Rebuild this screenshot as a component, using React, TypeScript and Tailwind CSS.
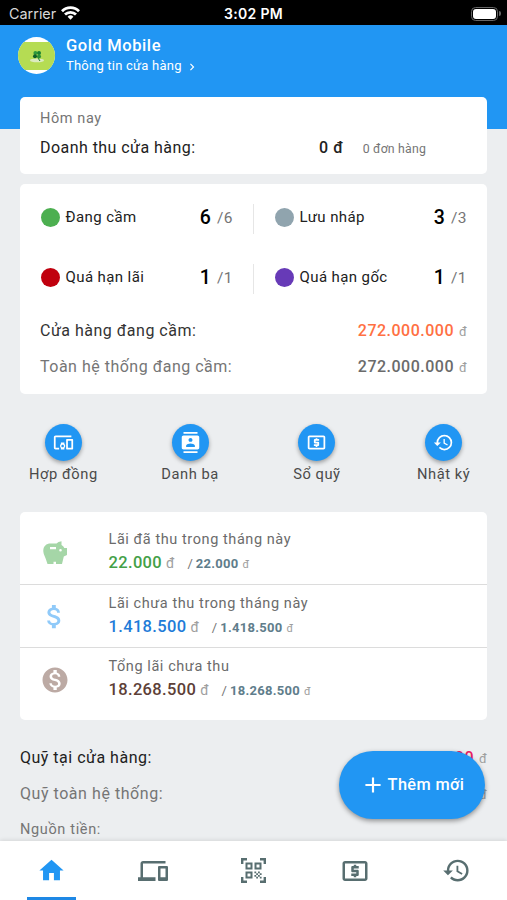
import React from "react";
import {
  MdHome,
  MdDevices,
  MdDevicesOther,
  MdContacts,
  MdLocalAtm,
  MdHistory,
  MdAttachMoney,
  MdMonetizationOn,
  MdAdd,
  MdChevronRight,
} from "react-icons/md";

function StatusBar() {
  return (
    <div className="grid h-[25px] shrink-0 grid-cols-3 items-center bg-black pr-1.5 pl-[9px] pt-[2px] font-[Inter,sans-serif] text-white">
      <div className="flex items-center gap-[5px] text-[14.4px] text-[#d8d8d8]">
        <span>Carrier</span>
        <svg width="19" height="14" viewBox="0 0 19 14" fill="none" stroke="white" strokeWidth="2.8">
          <path d="M1 5.2a12 12 0 0 1 17 0" />
          <path d="M4 8.6a7.8 7.8 0 0 1 11 0" />
          <path d="M9.5 13.7 6.6 10.8a4.1 4.1 0 0 1 5.8 0z" fill="white" stroke="none" />
        </svg>
      </div>
      <div className="pr-[3px] text-center text-[14px] font-semibold tracking-[0.35px]">3:02 PM</div>
      <div className="flex items-center justify-end gap-px">
        <div className="h-[14px] w-[27px] rounded-[4.5px] border border-[#666] p-px">
          <div className="h-full w-full rounded-[3px] bg-white" />
        </div>
        <div className="h-[5px] w-[2px] rounded-r-full bg-[#666]" />
      </div>
    </div>
  );
}

function Header() {
  return (
    <div className="flex h-[104px] shrink-0 items-start gap-[11px] bg-[#2196f3] pt-[12px] pl-[18px] text-white">
      <div className="flex h-[37px] w-[37px] items-center overflow-hidden rounded-full bg-white">
        <div className="flex h-[28px] w-full items-center justify-center bg-[#b5dc53]">
          <svg width="16" height="14" viewBox="0 0 16 14">
            <ellipse cx="8" cy="11.4" rx="7" ry="1.9" fill="#dcebc0" />
            <path d="M9 7q0 3 2 5" stroke="#1b7a2e" strokeWidth="1" fill="none" />
            <circle cx="6.4" cy="4" r="2" fill="#2f9a3c" />
            <circle cx="10" cy="4" r="2" fill="#178032" />
            <circle cx="6" cy="7.3" r="2" fill="#0f5f2a" />
            <circle cx="10" cy="7.4" r="2" fill="#2b9136" />
          </svg>
        </div>
      </div>
      <div>
        <div className="text-[16.5px] leading-[18px] font-medium tracking-[0.6px]">Gold Mobile</div>
        <div className="mt-px flex items-center gap-[3px] text-[13px] leading-[20px] tracking-[0.22px]">
          <span>Thông tin cửa hàng</span>
          <MdChevronRight size={14} className="mt-0.5" />
        </div>
      </div>
    </div>
  );
}

function Stat({ color, label, count, total }: { color: string; label: string; count: number; total: number }) {
  return (
    <div className="flex h-[30px] flex-1 items-center pr-[20px] pb-[4px] pl-[21px]">
      <span className={`h-[19px] w-[19px] rounded-full ${color}`} />
      <span className="ml-[5.5px] text-[15px] tracking-[0.4px] text-[#212121]">{label}</span>
      <span className="mt-px ml-auto text-[19.5px] font-medium text-black">{count}</span>
      <span className="mt-[4px] ml-1.5 text-[15.5px] tracking-[0.5px] text-[#757575]">/{total}</span>
    </div>
  );
}

function Amount({ value, color }: { value: string; color: string }) {
  return (
    <span className="flex items-baseline gap-[5px]">
      <span className={`text-[16px] font-medium tracking-[0.5px] ${color}`}>{value}</span>
      <span className="text-[13px] tracking-[0.2px] text-[#9e9e9e]">đ</span>
    </span>
  );
}

function Shortcut({ icon, label }: { icon: React.ReactNode; label: string }) {
  return (
    <div className="flex flex-1 flex-col items-center">
      <div className="flex h-[37px] w-[37px] items-center justify-center rounded-full bg-[#2196f3] text-white shadow-[0_2px_4px_rgba(0,0,0,0.35)]">
        {icon}
      </div>
      <span className="mt-[3px] text-[14.7px] leading-5 tracking-[0.55px] text-[#4a4a4a]">{label}</span>
    </div>
  );
}

function Interest({ icon, title, value, total, color }: { icon: React.ReactNode; title: string; value: string; total: string; color: string }) {
  return (
    <div className="flex items-center pl-[21px]">
      <div className="mb-[2px] flex w-[27px] justify-center [&>svg]:shrink-0">{icon}</div>
      <div className="ml-[40.5px]">
        <div className="text-[14.5px] leading-5 tracking-[0.57px] text-[#6b6b6b]">{title}</div>
        <div className="flex items-baseline leading-[25px]">
          <span className={`text-[16.5px] font-medium tracking-[0.35px] ${color}`}>{value}</span>
          <span className="ml-1 text-[14px] text-[#9e9e9e]">đ</span>
          <span className="ml-[13px] text-[13px] text-[#757575]">/</span>
          <span className="ml-[3px] text-[13px] font-bold tracking-[0.28px] text-[#607d8b]">{total}</span>
          <span className="ml-1 text-[11px] text-[#9e9e9e]">đ</span>
        </div>
      </div>
    </div>
  );
}

function PiggyBank() {
  return (
    <svg width="26" height="26" viewBox="0 0 26 26" fill="#a5d6a7">
      <path
        fillRule="evenodd"
        d="M7 3.5h7.5Q16 1.5 19.5 1.3V5q2 1 2.8 3H25v7l-3.2 1.6L20 24h-6v-2.2h-2.5V24h-6Q4 19 1.8 14 .5 9.5 2.4 6.5 4 3.8 7 3.5ZM8 7v2.2h6V7ZM18.5 9a1.3 1.3 0 1 0 0 2.6 1.3 1.3 0 0 0 0-2.6Z"
      />
    </svg>
  );
}

function QrScan() {
  return (
    <svg width="25" height="25" viewBox="0 0 25 25" fill="none" stroke="currentColor" strokeWidth="2">
      <path d="M1.2 6V1.2H6M19 1.2h4.8V6M1.2 19v4.8H6M19 23.8h4.8V19" strokeWidth="2.4" />
      <path d="M5.5 5.5h5v5h-5zM14.5 5.5h5v5h-5zM5.5 14.5h5v5h-5z" />
      <path
        fill="currentColor"
        stroke="none"
        d="M13.4 13.4h1.8v1.8h-1.8zM17 13.4h1.8v1.8H17zM15.2 15.2H17V17h-1.8zM18.8 15.2h1.8V17h-1.8zM13.4 17h1.8v1.8h-1.8zM17 17h1.8v1.8H17zM15.2 18.8H17v1.8h-1.8zM18.8 18.8h1.8v1.8h-1.8z"
      />
    </svg>
  );
}

function BottomNav() {
  return (
    <nav className="relative grid h-[59px] shrink-0 grid-cols-5 bg-white text-[#586e70] shadow-[0_-1px_4px_rgba(0,0,0,0.1)]">
      <div className="flex flex-col items-center justify-between pt-[15px] pl-px text-[#2196f3]">
        <MdHome size={29} />
        <div className="h-[3px] w-[49px] bg-[#1e88e5]" />
      </div>
      <div className="flex justify-center pt-[15px] pl-px"><MdDevices size={30} /></div>
      <div className="flex justify-center pt-[17px]"><QrScan /></div>
      <div className="flex justify-center pt-[15px]"><MdLocalAtm size={30} /></div>
      <div className="flex justify-center pt-[15px]"><MdHistory size={29} /></div>
    </nav>
  );
}

export default function App() {
  return (
    <div className="relative flex h-[900px] w-[507px] flex-col overflow-hidden bg-[#eceef0] font-[Roboto,sans-serif]">
      <StatusBar />
      <Header />
      <main className="-mt-[32px] flex min-h-0 flex-1 flex-col">
        <section className="mx-5 h-[77px] shrink-0 rounded-[5px] bg-white px-5 pt-[12px]">
          <div className="text-[14.5px] leading-5 tracking-[0.6px] text-[#757575]">Hôm nay</div>
          <div className="mt-[9px] flex items-baseline leading-5">
            <span className="w-[279px] text-[16px] tracking-[0.45px] text-[#212121]">Doanh thu cửa hàng:</span>
            <span className="text-[16px] font-medium tracking-[0.6px] text-[#212121]">0 đ</span>
            <span className="ml-[19px] text-[12.3px] tracking-[0.2px] text-[#757575]">0 đơn hàng</span>
          </div>
        </section>

        <section className="mx-5 mt-[10px] h-[210px] shrink-0 rounded-[5px] bg-white pt-[20px]">
          <div className="flex divide-x divide-[#e6e6e6]">
            <Stat color="bg-[#4caf50]" label="Đang cầm" count={6} total={6} />
            <Stat color="bg-[#90a4ae]" label="Lưu nháp" count={3} total={3} />
          </div>
          <div className="mt-[30px] flex divide-x divide-[#e6e6e6]">
            <Stat color="bg-[#c0000e]" label="Quá hạn lãi" count={1} total={1} />
            <Stat color="bg-[#673ab7]" label="Quá hạn gốc" count={1} total={1} />
          </div>
          <div className="mt-[27px] flex items-baseline justify-between px-5 leading-5">
            <span className="text-[16px] tracking-[0.5px] text-[#333]">Cửa hàng đang cầm:</span>
            <Amount value="272.000.000" color="text-[#ff7043]" />
          </div>
          <div className="mt-[15px] flex items-baseline justify-between px-5 leading-5">
            <span className="text-[16px] tracking-[0.5px] text-[#757575]">Toàn hệ thống đang cầm:</span>
            <Amount value="272.000.000" color="text-[#6b6b6b]" />
          </div>
        </section>

        <section className="mt-[30px] flex h-[88px] shrink-0">
          <Shortcut label="Hợp đồng" icon={<MdDevicesOther size={21} />} />
          <Shortcut label="Danh bạ" icon={<MdContacts size={21} />} />
          <Shortcut label="Sổ quỹ" icon={<MdLocalAtm size={21} />} />
          <Shortcut label="Nhật ký" icon={<MdHistory size={21} />} />
        </section>

        <section className="mx-5 h-[208px] shrink-0 divide-y divide-[#dcdcdc] rounded-[5px] bg-white pt-[9px]">
          <div className="h-[64px] pt-[9px]">
            <Interest icon={<PiggyBank />} title="Lãi đã thu trong tháng này" value="22.000" total="22.000" color="text-[#43a047]" />
          </div>
          <div className="h-[63px] pt-[9px]">
            <Interest icon={<MdAttachMoney size={31} color="#90caf9" />} title="Lãi chưa thu trong tháng này" value="1.418.500" total="1.418.500" color="text-[#1e7bd8]" />
          </div>
          <div className="h-[64px] pt-[9px]">
            <Interest icon={<MdMonetizationOn size={30} color="#bcaaa4" />} title="Tổng lãi chưa thu" value="18.268.500" total="18.268.500" color="text-[#5d4037]" />
          </div>
        </section>

        <section className="shrink-0 px-5 pt-[28px] text-[#757575]">
          <div className="flex items-baseline justify-between leading-5">
            <span className="text-[16px] tracking-[0.5px] text-[#212121]">Quỹ tại cửa hàng:</span>
            <Amount value="247.000.000" color="text-[#e91e63]" />
          </div>
          <div className="mt-[15px] flex items-baseline justify-between leading-5">
            <span className="text-[16px] tracking-[0.55px]">Quỹ toàn hệ thống:</span>
            <Amount value="247.000.000" color="text-[#6b6b6b]" />
          </div>
          <div className="mt-[15px] text-[14.5px] leading-5 tracking-[0.65px]">Nguồn tiền:</div>
        </section>
      </main>
      <BottomNav />
      <button className="absolute top-[751px] left-[339px] flex h-[68px] w-[146px] items-center justify-center gap-0.5 rounded-full bg-[#2196f3] text-[16.3px] font-medium tracking-[0.4px] text-white shadow-[0_2px_5px_rgba(0,0,0,0.4)]">
        <MdAdd size={26} />
        <span>Thêm mới</span>
      </button>
    </div>
  );
}
